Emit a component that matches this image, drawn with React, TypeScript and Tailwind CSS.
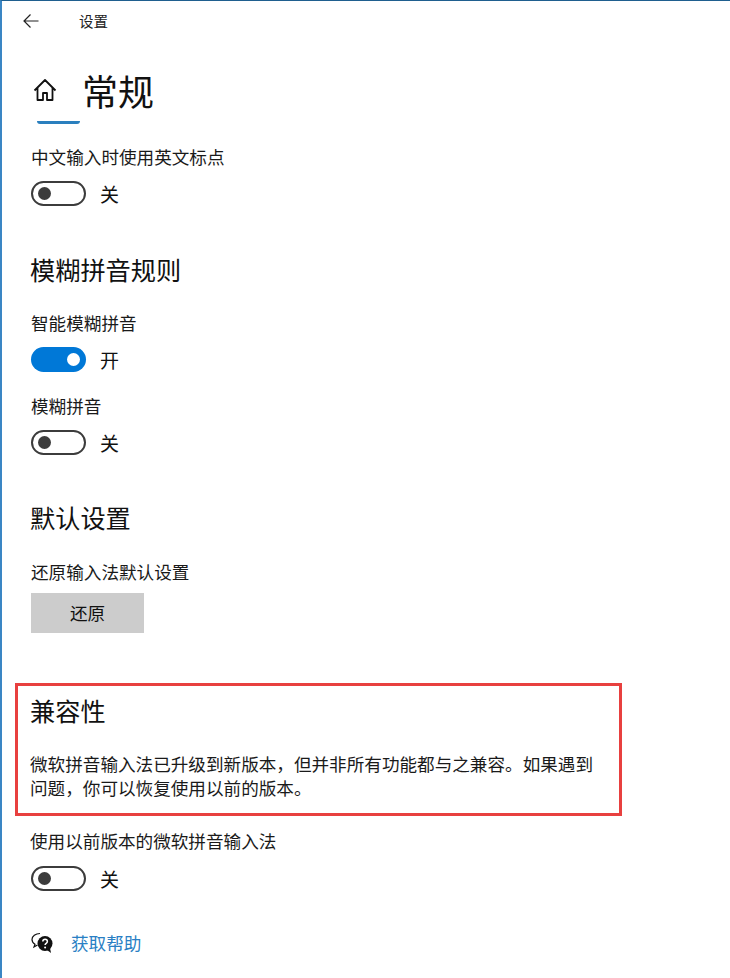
const FONT = "font-['Noto_Sans_CJK_SC','Liberation_Sans',sans-serif]";

function Toggle({ on, label }: { on?: boolean; label: string }) {
  return (
    <div className="flex items-center h-[25px]">
      {on ? (
        <div className="w-[55px] h-[25px] rounded-full bg-[#0078d7] flex items-center justify-end pr-[6px]">
          <div className="w-[13px] h-[13px] rounded-full bg-white" />
        </div>
      ) : (
        <div className="w-[55px] h-[25px] rounded-full border-[2px] border-[#3c3c3c] bg-white flex items-center pl-[5px]">
          <div className="w-[13px] h-[13px] rounded-full bg-[#3c3c3c]" />
        </div>
      )}
      <span className="ml-[14px] text-[19px] leading-[25px] text-[#111]">{label}</span>
    </div>
  );
}

function Label({ children, className }: { children: string; className?: string }) {
  return <p className={`text-[17.6px] leading-[24px] text-[#1a1a1a] ${className ?? ''}`}>{children}</p>;
}

function Heading({ children, className }: { children: string; className?: string }) {
  return <h2 className={`-ml-px text-[25.2px] leading-[34px] text-[#111] ${className ?? ''}`}>{children}</h2>;
}

export default function App() {
  return (
    <div className={`${FONT} w-[730px] h-[978px] overflow-hidden bg-white border-t border-t-[#1f5f8f] border-l-2 border-l-[#3a86c4]`}>
      {/* title bar */}
      <div className="flex items-center h-[40px] pl-[20px]">
        <svg width="18" height="16" viewBox="0 0 18 16" fill="none" stroke="#222" strokeWidth="1.2">
          <path d="M16.5 8H2M8.5 1.5L2 8l6.500 6.500" />
        </svg>
        <span className="ml-[39px] text-[14.5px] text-[#222]">设置</span>
      </div>

      <div className="pl-[29px]">
        <div className="flex items-center h-[60px] mt-[19px]">
          <svg className="mr-[25px] ml-[2px]" width="24" height="24" viewBox="0 0 24 24" fill="none" stroke="#111" strokeWidth="1.8" strokeLinejoin="round">
            <path d="M1.500 12.500L12 2l10.500 10.500M4.500 10v12h5.500v-7h4v7h5.500V10" />
          </svg>
          <h1 className="text-[36px] leading-[60px] text-[#111]">常规</h1>
        </div>
        <div className="ml-[6px] mt-[1px] w-[43px] h-[3px] bg-[#2a7fbe] rounded-b-full" />

        <Label className="mt-[21px]">中文输入时使用英文标点</Label>
        <div className="mt-[12px]"><Toggle label="关" /></div>

        <Heading className="mt-[46px]">模糊拼音规则</Heading>
        <Label className="mt-[25px]">智能模糊拼音</Label>
        <div className="mt-[12px]"><Toggle on label="开" /></div>
        <Label className="mt-[22px]">模糊拼音</Label>
        <div className="mt-[12px]"><Toggle label="关" /></div>

        <Heading className="mt-[45px]">默认设置</Heading>
        <Label className="mt-[26px]">还原输入法默认设置</Label>
        <button className="block mt-[9px] w-[113px] h-[40px] bg-[#cccccc] text-[17.6px] text-[#111]">还原</button>
      </div>

      {/* highlighted section */}
      <div className="ml-[13px] mt-[50px] w-[607px] h-[133px] border-[3px] border-[#e8403f] pl-[13px] pt-[7px]">
        <Heading>兼容性</Heading>
        <p className="-ml-px mt-[25px] w-[575px] text-[17.6px] leading-[24px] text-[#1a1a1a]">
          微软拼音输入法已升级到新版本，但并非所有功能都与之兼容。如果遇到问题，你可以恢复使用以前的版本。
        </p>
      </div>

      <div className="pl-[29px]">
        <Label className="mt-[13px] -ml-px">使用以前版本的微软拼音输入法</Label>
        <div className="mt-[13px]"><Toggle label="关" /></div>
        <div className="flex items-center mt-[40px]">
          <svg width="22" height="22" viewBox="0 0 22 22">
            <path d="M9 1.500C4.500 1.500 1 4 1 7.500c0 2 1.200 3.700 3 4.700L3 15l3.500-2" fill="none" stroke="#111" strokeWidth="1.2" />
            <circle cx="14" cy="11.500" r="7.500" fill="#111" />
            <path d="M16 18l4 3-1-5z" fill="#111" />
            <path d="M11.800 9.500c0-3 4.600-3 4.600 0 0 1.800-2.300 1.800-2.300 3.500" fill="none" stroke="#fff" strokeWidth="1.5" />
            <circle cx="14.100" cy="15.500" r="1" fill="#fff" />
          </svg>
          <a className="ml-[18px] text-[17.6px] leading-[24px] text-[#2a7fc4]">获取帮助</a>
        </div>
      </div>
    </div>
  );
}
